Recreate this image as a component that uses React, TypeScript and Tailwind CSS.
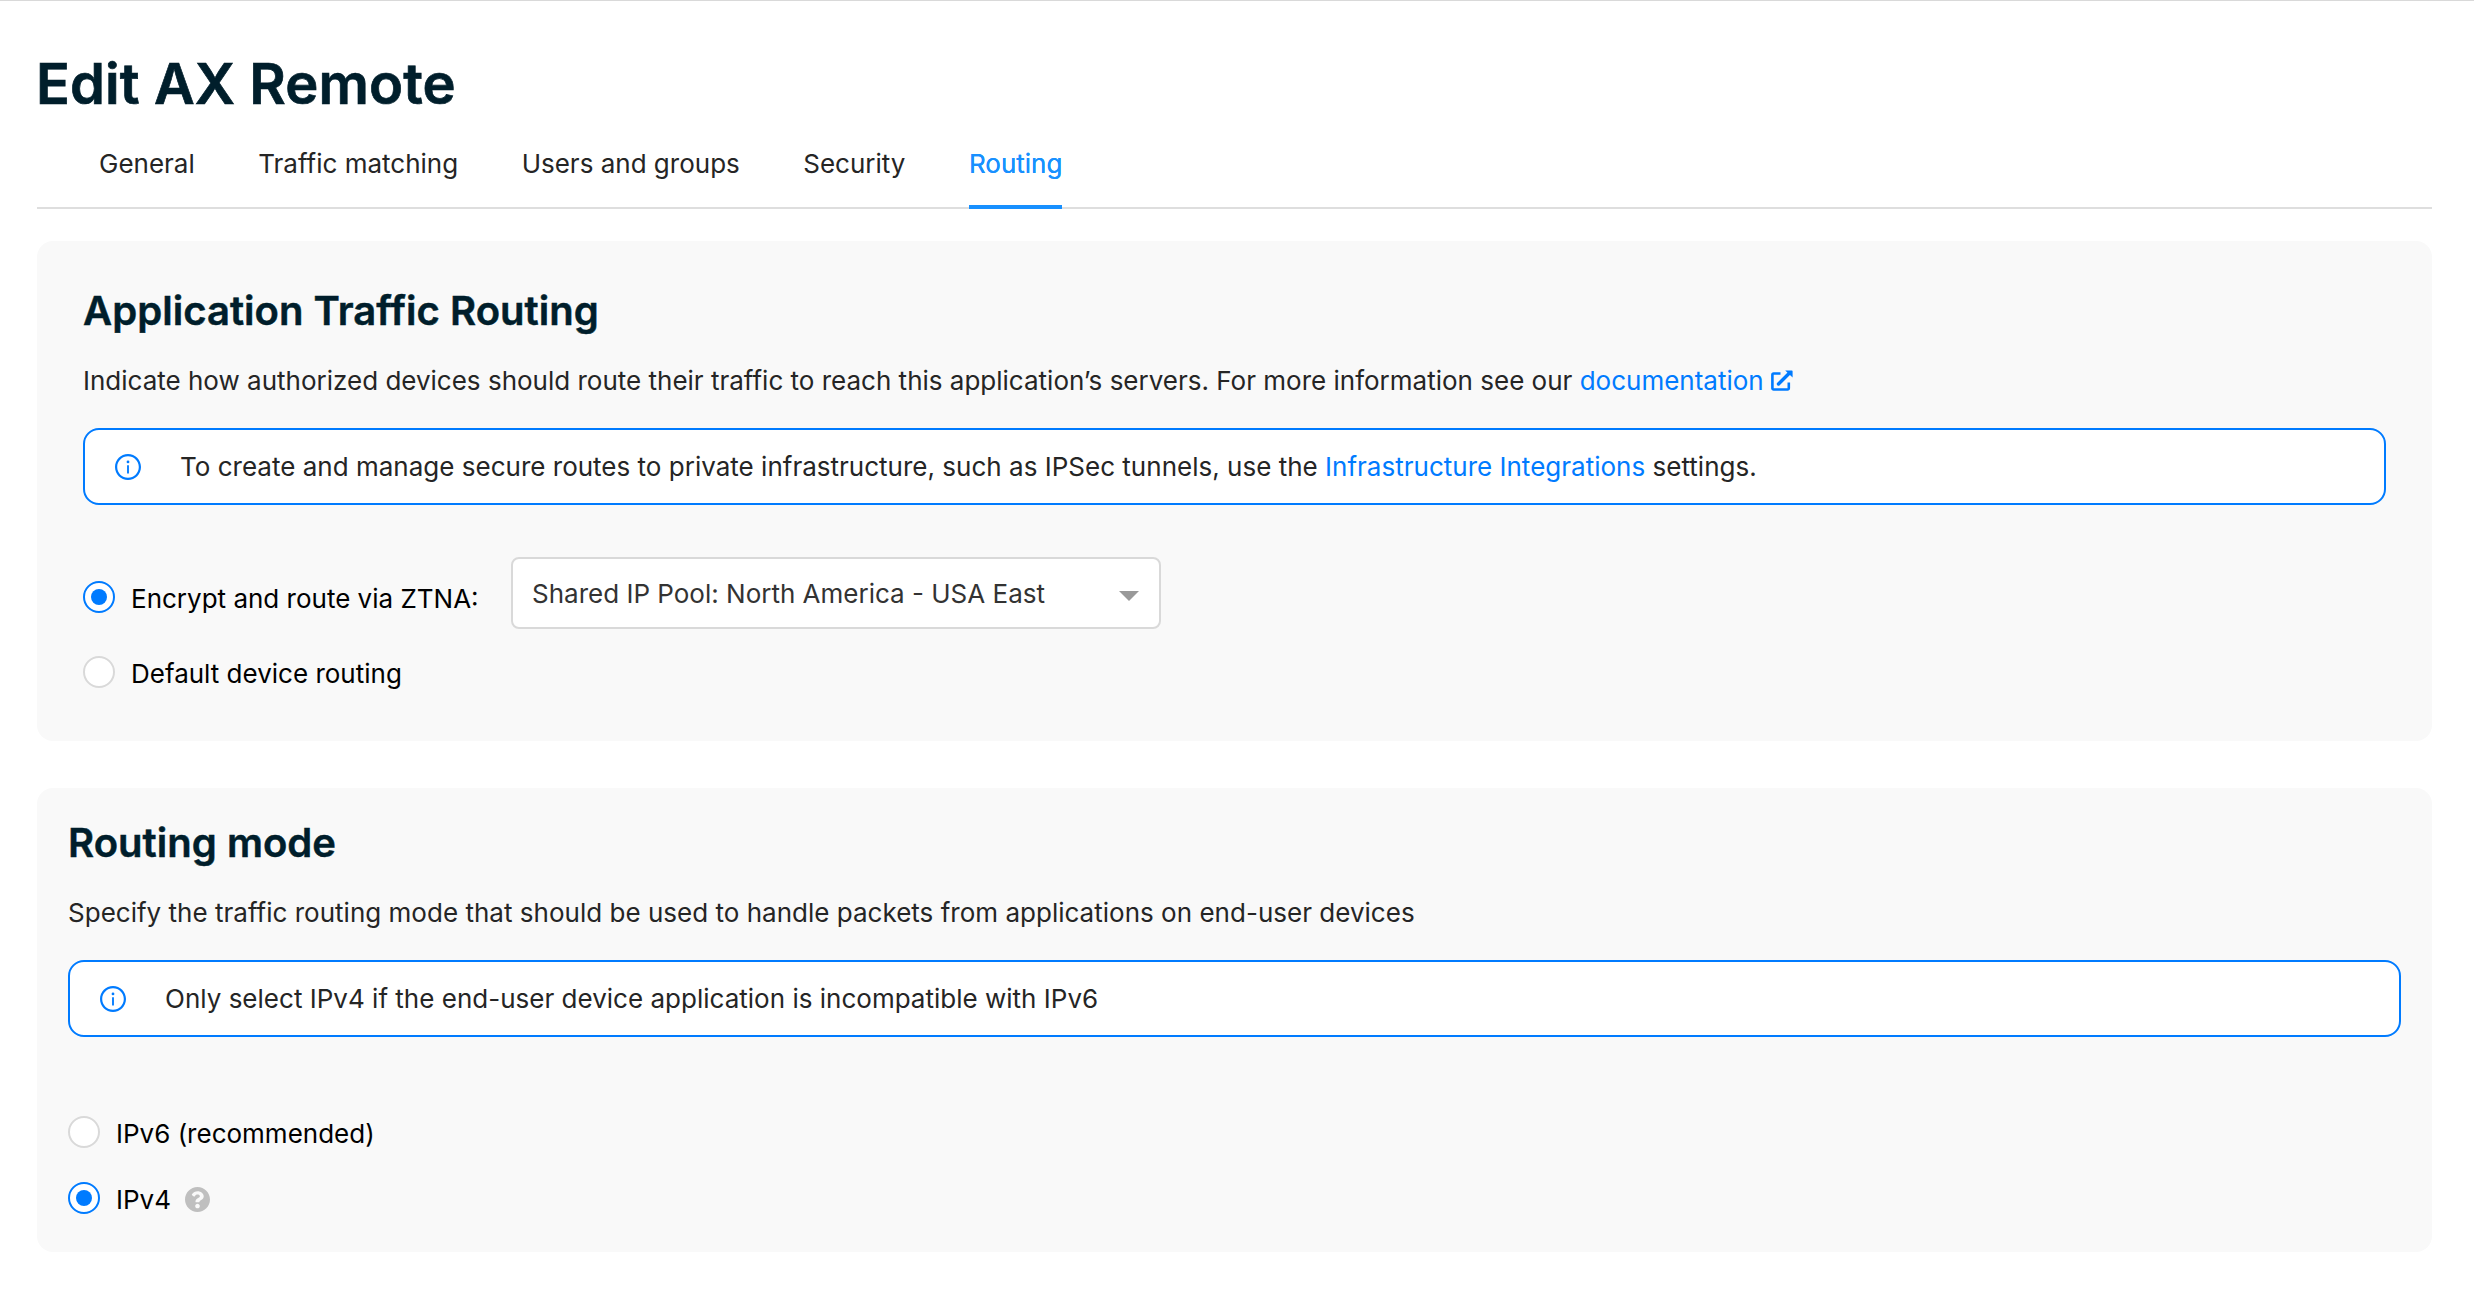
import { useState } from "react";
import type { ReactNode } from "react";

const TABS = ["General", "Traffic matching", "Users and groups", "Security", "Routing"];

function InfoIcon() {
  return (
    <svg viewBox="64 64 896 896" className="size-[26px] shrink-0 fill-[#007bff]" aria-hidden="true">
      <path d="M512 64C264.600 64 64 264.600 64 512s200.600 448 448 448 448-200.600 448-448S759.400 64 512 64zm0 820c-205.400 0-372-166.600-372-372s166.600-372 372-372 372 166.600 372 372-166.600 372-372 372z" />
      <path d="M464 336a48 48 0 1096 0 48 48 0 10-96 0zm72 112h-48c-4.400 0-8 3.600-8 8v272c0 4.400 3.600 8 8 8h48c4.400 0 8-3.600 8-8V456c0-4.400-3.600-8-8-8z" />
    </svg>
  );
}

function ExternalIcon() {
  return (
    <svg viewBox="0 0 22 21" className="ml-[7px] inline-block h-[21px] w-[22px] align-[-1px]" fill="none" aria-hidden="true">
      <path d="M9.500 3.500H2.600a1.200 1.200 0 0 0-1.200 1.200v13.600a1.200 1.200 0 0 0 1.200 1.200h14a1.200 1.200 0 0 0 1.200-1.200V12.500" stroke="#007bff" strokeWidth="2.600" />
      <path d="M7.500 14L18 3.500" stroke="#007bff" strokeWidth="3.400" strokeLinecap="round" />
      <path d="M14.200 0.400h6.600a0.800 0.800 0 0 1 0.800 0.800v6.400z" fill="#007bff" />
    </svg>
  );
}

function HelpIcon() {
  return (
    <svg viewBox="8 8 496 496" className="size-[25px] fill-[#bfbfbf]" aria-hidden="true">
      <path d="M504 256c0 136.997-111.043 248-248 248S8 392.997 8 256C8 119.083 119.043 8 256 8s248 111.083 248 248zM262.655 90c-54.497 0-89.255 22.957-116.549 63.758-3.536 5.286-2.353 12.415 2.715 16.258l34.699 26.310c5.205 3.947 12.621 3.008 16.665-2.122 17.864-22.658 30.113-35.797 57.303-35.797 20.429 0 45.698 13.148 45.698 32.958 0 14.976-12.363 22.667-32.534 33.976C247.128 238.528 216 254.941 216 296v4c0 6.627 5.373 12 12 12h56c6.627 0 12-5.373 12-12v-1.333c0-28.462 83.186-29.647 83.186-106.667 0-58.002-60.165-102-116.531-102zM256 338c-25.365 0-46 20.635-46 46 0 25.364 20.635 46 46 46s46-20.636 46-46c0-25.365-20.635-46-46-46z" />
    </svg>
  );
}

function Notice({ children }: { children: ReactNode }) {
  return (
    <div className="flex h-[77px] items-center rounded-2xl border-2 border-[#007bff] bg-white pl-[30px]">
      <InfoIcon />
      <p className="-mt-px ml-[39px] whitespace-nowrap leading-[39px] tracking-[0.01px]">{children}</p>
    </div>
  );
}

function Radio({ checked, onSelect, label }: { checked: boolean; onSelect: () => void; label: string }) {
  return (
    <button type="button" role="radio" aria-checked={checked} onClick={onSelect} className="flex h-8 items-center gap-4 text-black">
      <span className={checked ? "flex size-8 items-center justify-center rounded-full border-2 border-[#007bff] bg-white" : "size-8 rounded-full border-2 border-[#d9d9d9] bg-white"}>
        {checked && <span className="size-4 rounded-full bg-[#007bff]" />}
      </span>
      <span className="mt-[3px] leading-8">{label}</span>
    </button>
  );
}

export default function App() {
  const [tab, setTab] = useState("Routing");
  const [route, setRoute] = useState("ztna");
  const [mode, setMode] = useState("ipv4");
  return (
    <main className="h-[1298px] w-[2474px] overflow-hidden border-t border-[#d9d9d9] bg-white pr-[42px] pl-[37px] font-['Inter',sans-serif] text-[26px] text-[#252525]">
      <h1 className="mt-[43px] -ml-px text-[56px] leading-[80px] font-semibold tracking-[0.1px] text-[#001e2b] [-webkit-text-stroke:0.7px_#001e2b]">Edit AX Remote</h1>
      <nav className="mt-[3px] flex h-[82px] gap-[63.5px] border-b-2 border-[#dedede] pl-[62px]">
        {TABS.map((t) => (
          <button
            key={t}
            type="button"
            onClick={() => setTab(t)}
            className={
              t === tab
                ? "h-[82px] shrink-0 border-b-4 border-[#1890ff] pb-[5px] text-[#1890ff] [text-shadow:0_0_0.5px_currentColor]"
                : "h-[82px] shrink-0 border-b-4 border-transparent pb-[5px]"
            }
          >
            {t}
          </button>
        ))}
      </nav>

      <section className="mt-8 h-[500px] rounded-2xl bg-[#f9f9f9] px-[46px] pt-10">
        <h2 className="text-[40px] leading-[60px] font-semibold tracking-[0.04px] text-[#001e2b] [-webkit-text-stroke:0.5px_#001e2b]">Application Traffic Routing</h2>
        <p className="mt-5 mb-[27px] h-10 leading-10 whitespace-nowrap">
          Indicate how authorized devices should route their traffic to reach this application’s servers. For more information see our{" "}
          <a href="#documentation" className="text-[#007bff]">
            documentation
            <ExternalIcon />
          </a>
        </p>
        <Notice>
          To create and manage secure routes to private infrastructure, such as IPSec tunnels, use the{" "}
          <a href="#integrations" className="text-[#007bff]">Infrastructure Integrations</a> settings.
        </Notice>
        <div className="mt-[52px] flex items-start">
          <div className="mt-6 w-[428px]">
            <Radio checked={route === "ztna"} onSelect={() => setRoute("ztna")} label="Encrypt and route via ZTNA:" />
          </div>
          <div className="flex h-[72px] w-[650px] items-center justify-between rounded-lg border-2 border-[#d9d9d9] bg-white pr-5 pl-[19px] text-[#333]">
            <span>Shared IP Pool: North America - USA East</span>
            <svg viewBox="0 0 20 10" className="mt-[6px] h-[10px] w-5 fill-[#999]" aria-hidden="true">
              <path d="M0 0h20L10 10z" />
            </svg>
          </div>
        </div>
        <div className="mt-[27px]">
          <Radio checked={route === "default"} onSelect={() => setRoute("default")} label="Default device routing" />
        </div>
      </section>

      <section className="mt-[47px] h-[464px] rounded-2xl bg-[#f9f9f9] px-[31px] pt-[25px]">
        <h2 className="text-[40px] leading-[60px] font-semibold tracking-[0.04px] text-[#001e2b] [-webkit-text-stroke:0.5px_#001e2b]">Routing mode</h2>
        <p className="mt-5 mb-[27px] h-10 leading-10 tracking-[0.015px] whitespace-nowrap">
          Specify the traffic routing mode that should be used to handle packets from applications on end-user devices
        </p>
        <Notice>Only select IPv4 if the end-user device application is incompatible with IPv6</Notice>
        <div className="mt-[79px] flex flex-col gap-[34px]">
          <Radio checked={mode === "ipv6"} onSelect={() => setMode("ipv6")} label="IPv6 (recommended)" />
          <div className="flex items-center gap-[14px]">
            <Radio checked={mode === "ipv4"} onSelect={() => setMode("ipv4")} label="IPv4" />
            <span className="mt-[3px]"><HelpIcon /></span>
          </div>
        </div>
      </section>
    </main>
  );
}
